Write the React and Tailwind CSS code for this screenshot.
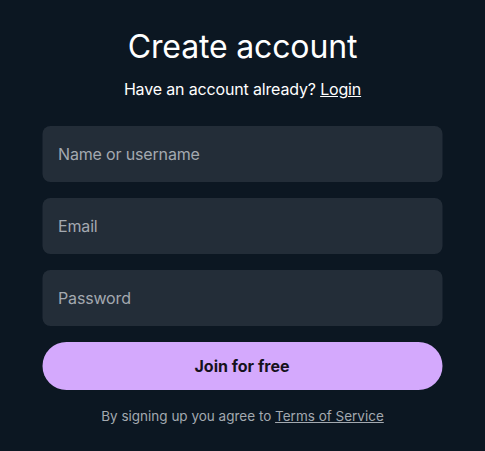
export default function App() {
  return (
    <div className="min-h-[451px] w-full bg-[#0c1722] flex flex-col items-center pt-[26px]" style={{ fontFamily: 'Inter, "Liberation Sans", sans-serif' }}>
      <h1 className="text-[32px] leading-[42px] text-white font-normal tracking-[-0.005em]">Create account</h1>
      <p className="mt-[10px] text-[16px] leading-[22px] text-white tracking-[-0.01em]">
        Have an account already? <a className="underline">Login</a>
      </p>
      <div className="mt-[26px] w-[400px] flex flex-col gap-4 -translate-x-[0.5px]">
        <div className="h-[56px] rounded-lg bg-[#232d38] flex items-center px-4 text-[16px] text-[#a3a9b0] tracking-[-0.01em]">Name or username</div>
        <div className="h-[56px] rounded-lg bg-[#232d38] flex items-center px-4 text-[16px] text-[#a3a9b0] tracking-[-0.01em]">Email</div>
        <div className="h-[56px] rounded-lg bg-[#232d38] flex items-center px-4 text-[16px] text-[#a3a9b0] tracking-[-0.01em]">Password</div>
        <button className="h-[48px] rounded-full bg-[#d4a9fd] text-[#16121c] font-bold text-[16px]">Join for free</button>
      </div>
      <p className="mt-[16px] text-[13.5px] leading-[20px] text-[#a3a9b0]">
        By signing up you agree to <a className="underline">Terms of Service</a>
      </p>
    </div>
  );
}
